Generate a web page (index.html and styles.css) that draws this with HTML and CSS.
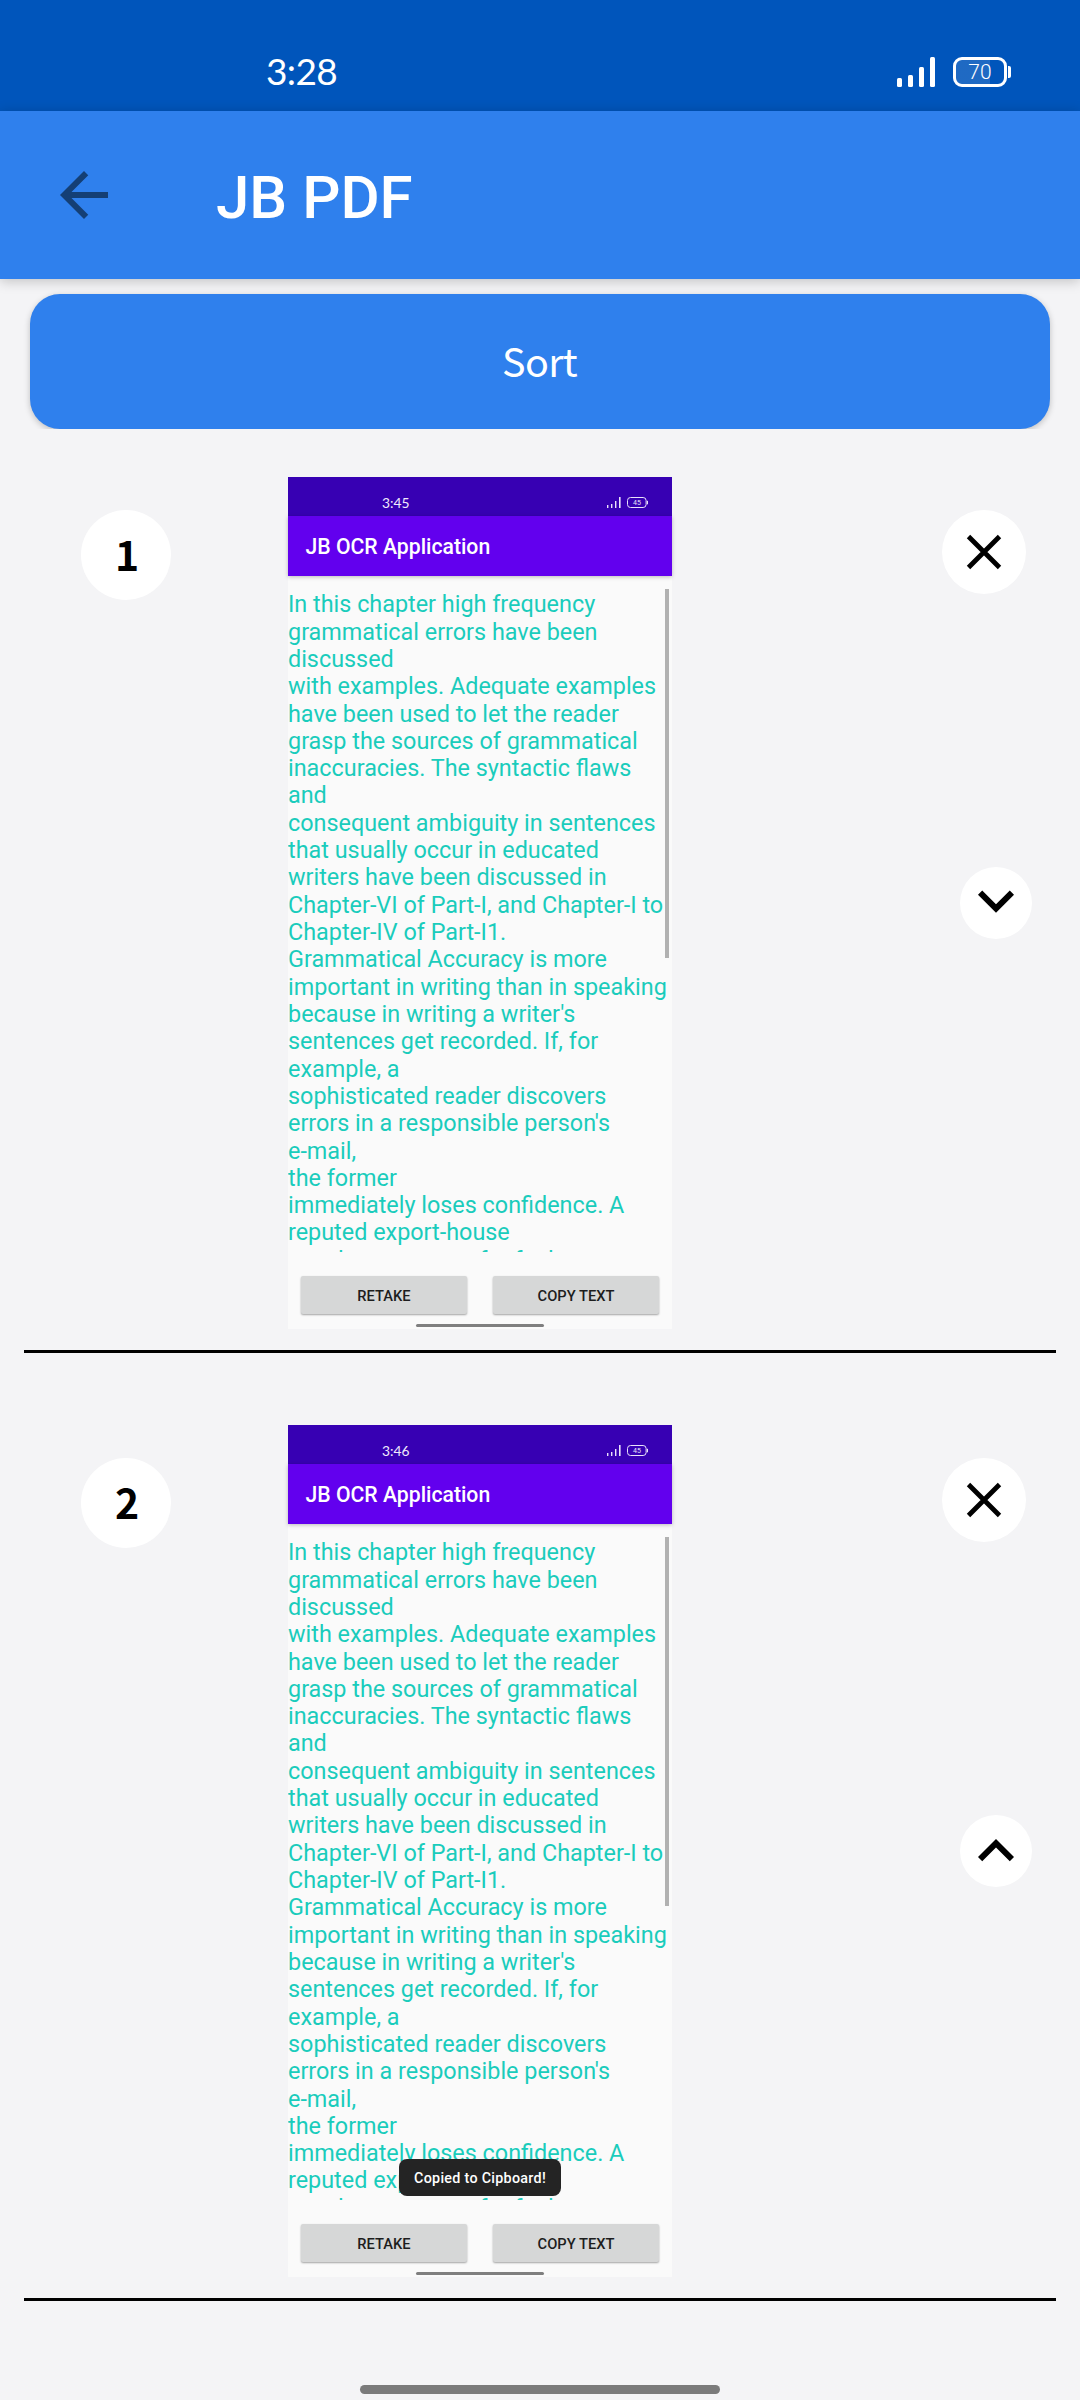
FILE: index.html
```html
<!DOCTYPE html>
<html lang="en">
<head>
<meta charset="utf-8">
<title>JB PDF</title>
<link rel="stylesheet" href="styles.css">
</head>
<body>
<div class="screen">
  <div class="status">
    <span class="clock">3:28</span>
    <svg class="signal" width="38" height="30" viewBox="0 0 38 30"><g fill="#fff"><rect y="21" width="5" height="9" rx="1.5"/><rect x="11" y="18" width="5" height="12" rx="1.5"/><rect x="22" y="10" width="5" height="20" rx="1.5"/><rect x="33" width="5" height="30" rx="1.5"/></g></svg>
    <div class="battery"><span>70</span></div>
  </div>
  <header class="appbar">
    <svg width="72" height="72" viewBox="0 0 24 24"><path fill="#143f75" d="M20 11H7.83l5.59-5.59L12 4l-8 8 8 8 1.41-1.41L7.83 13H20v-2z"/></svg>
    <h1>JB PDF</h1>
  </header>
  <main class="content">
    <div class="sort-wrap"><button class="sort">Sort</button></div>
    <section class="item">
      <div class="num">1</div>
      <div class="page">
        <div class="p-status"><span class="p-clock">3:45</span>
          <svg width="42" height="12" viewBox="0 0 42 12"><g fill="#e9e1fa"><rect y="8" width="1.4" height="3"/><rect x="4" y="7" width="1.4" height="4"/><rect x="8" y="4" width="1.4" height="7"/><rect x="12" y="0" width="1.6" height="11"/><path d="M39.8 3.5l1.2.6v3l-1.2.6z"/></g><rect x="20.5" y=".5" width="18.6" height="10" rx="3" fill="none" stroke="#e9e1fa"/><text x="30" y="8.2" text-anchor="middle" class="p-level">45</text></svg>
        </div>
        <div class="p-bar">JB OCR Application</div>
        <div class="p-body">
          <div class="p-text">In this chapter high frequency<br>grammatical errors have been<br>discussed<br>with examples. Adequate examples<br>have been used to let the reader<br>grasp the sources of grammatical<br>inaccuracies. The syntactic flaws<br>and<br>consequent ambiguity in sentences<br>that usually occur in educated<br>writers have been discussed in<br>Chapter-VI of Part-I, and Chapter-I to<br>Chapter-IV of Part-I1.<br>Grammatical Accuracy is more<br>important in writing than in speaking<br>because in writing a writer's<br>sentences get recorded. If, for<br>example, a<br>sophisticated reader discovers<br>errors in a responsible person's<br>e-mail,<br>the former<br>immediately loses confidence. A<br>reputed export-house<br>may lose contract for faulty</div>
          <div class="p-scroll"></div>
        </div>
        <div class="p-actions"><span>RETAKE</span><span>COPY TEXT</span></div>
        <div class="p-home"></div>
      </div>
      <div class="tools">
        <svg class="close" width="84" height="84" viewBox="0 0 84 84"><circle cx="42" cy="42" r="42" fill="#fff"/><path d="M26.5 26.5l31 31M57.5 26.5l-31 31" stroke="#000" stroke-width="4.8"/></svg>
        <svg class="move" width="72" height="72" viewBox="0 0 24 24"><circle cx="12" cy="12" r="12" fill="#fff"/><path d="M7.41 7.84L12 12.42l4.59-4.58L18 9.25l-6 6-6-6z"/></svg>
      </div>
    </section>
    <section class="item">
      <div class="num">2</div>
      <div class="page">
        <div class="p-status"><span class="p-clock">3:46</span>
          <svg width="42" height="12" viewBox="0 0 42 12"><g fill="#e9e1fa"><rect y="8" width="1.4" height="3"/><rect x="4" y="7" width="1.4" height="4"/><rect x="8" y="4" width="1.4" height="7"/><rect x="12" y="0" width="1.6" height="11"/><path d="M39.8 3.5l1.2.6v3l-1.2.6z"/></g><rect x="20.5" y=".5" width="18.6" height="10" rx="3" fill="none" stroke="#e9e1fa"/><text x="30" y="8.2" text-anchor="middle" class="p-level">45</text></svg>
        </div>
        <div class="p-bar">JB OCR Application</div>
        <div class="p-body">
          <div class="p-text">In this chapter high frequency<br>grammatical errors have been<br>discussed<br>with examples. Adequate examples<br>have been used to let the reader<br>grasp the sources of grammatical<br>inaccuracies. The syntactic flaws<br>and<br>consequent ambiguity in sentences<br>that usually occur in educated<br>writers have been discussed in<br>Chapter-VI of Part-I, and Chapter-I to<br>Chapter-IV of Part-I1.<br>Grammatical Accuracy is more<br>important in writing than in speaking<br>because in writing a writer's<br>sentences get recorded. If, for<br>example, a<br>sophisticated reader discovers<br>errors in a responsible person's<br>e-mail,<br>the former<br>immediately loses confidence. A<br>reputed export-house<br>may lose contract for faulty</div>
          <div class="p-scroll"></div>
        </div>
        <div class="p-actions"><span>RETAKE</span><span>COPY TEXT</span></div>
        <div class="p-home"></div>
        <div class="toast">Copied to Cipboard!</div>
      </div>
      <div class="tools">
        <svg class="close" width="84" height="84" viewBox="0 0 84 84"><circle cx="42" cy="42" r="42" fill="#fff"/><path d="M26.5 26.5l31 31M57.5 26.5l-31 31" stroke="#000" stroke-width="4.8"/></svg>
        <svg class="move" width="72" height="72" viewBox="0 0 24 24"><circle cx="12" cy="12" r="12" fill="#fff"/><path d="M7.41 15.41L12 10.83l4.59 4.58L18 14l-6-6-6 6z"/></svg>
      </div>
    </section>
  </main>
  <div class="home"></div>
</div>
</body>
</html>
```
FILE: styles.css
```css
* { box-sizing: border-box; }
body { margin: 0; font-family: Roboto, sans-serif; }
svg { display: block; flex: none; }
.screen { width: 1080px; height: 2400px; background: #f4f4f6; overflow: hidden; display: flex; flex-direction: column; }

.status { height: 111px; background: #0055bb; display: flex; align-items: flex-start; padding: 57px 69px 0 266px; flex: none; color: #fff; }
.clock { font: 400 37px/28px Lato, sans-serif; flex: 1; letter-spacing: -0.6px; }
.signal { margin-right: 18px; }
.battery { width: 54px; height: 30px; margin-right: 4px; border: 3px solid #fff; border-radius: 9px; position: relative; text-align: center; font: 300 21px/24px Roboto, sans-serif; background: linear-gradient(90deg, rgba(255,255,255,.12) 34px, transparent 34px); }
.battery::after { content: ""; position: absolute; right: -7px; top: 6px; width: 3px; height: 12px; background: #fff; border-radius: 0 2px 2px 0; }

.appbar { height: 168px; flex: none; background: #2f80ed; display: flex; align-items: center; padding-left: 48px; box-shadow: 0 2px 12px rgba(0,0,0,.22); }
.appbar h1 { margin: 5px 0 0 96px; font-size: 60px; font-weight: 500; line-height: 72px; color: #fff; }

.content { flex: 1; display: flex; flex-direction: column; }
.sort-wrap { padding: 15px 30px 0; overflow: hidden; flex: none; display: flex; }
.sort { flex: 1; height: 135px; border: 0; border-radius: 30px; background: #2f80ed; color: #fff; font: 400 39.5px/60px "Noto Sans CJK SC", sans-serif; letter-spacing: -0.7px; box-shadow: 0 2px 6px rgba(0,0,0,.22); padding: 0 1px 3px 0; }

.item { margin: 0 24px; padding: 48px 24px 21px 57px; border-bottom: 3px solid #000; display: flex; align-items: stretch; flex: none; }
.item + .item { padding-top: 72px; }
.num { width: 90px; height: 90px; margin: 33px 117px 0 0; padding-left: 2px; border-radius: 50%; background: #fff; text-align: center; font: 700 41px/86px "Noto Sans CJK SC", sans-serif; color: #000; }
.tools { flex: 1; display: flex; flex-direction: column; align-items: flex-end; padding-top: 33px; gap: 273px; }
.close { margin-right: 6px; }

.page { width: 384px; height: 852px; background: #fafafa; position: relative; display: flex; flex-direction: column; }
.p-status { height: 39px; flex: none; background: #3700b3; display: flex; padding: 20px 23px 0 94px; justify-content: space-between; }
.p-clock { font: 400 13.8px/12px Lato, sans-serif; color: #f0eafc; }
.p-level { font: 400 7px Roboto, sans-serif; fill: #e9e1fa; }
.p-bar { height: 60px; flex: none; background: #6200ee; color: #fff; font-size: 21.2px; font-weight: 500; line-height: 62px; padding-left: 17.5px; box-shadow: 0 1px 4px rgba(0,0,0,.25); }
.p-body { height: 675px; margin-top: 1px; flex: none; overflow: hidden; display: flex; justify-content: space-between; padding: 12px 3px 0 0; }
.p-text { font-size: 23.38px; line-height: 27.32px; color: #1accbc; white-space: nowrap; padding-top: 2.3px; width: 377px; flex: none; }
.p-scroll { width: 4px; height: 369px; background: #b1b1b1; flex: none; }
.p-actions { display: flex; gap: 26px; padding: 24px 13px 0; flex: none; }
.p-actions span { flex: 1; height: 38px; background: #d6d7d7; border-radius: 2px; text-align: center; font-size: 14.7px; font-weight: 500; line-height: 40px; color: #1d1d1d; box-shadow: 0 1px 2px rgba(0,0,0,.35); }
.p-home { width: 128px; height: 3px; margin: 10px auto 0; border-radius: 2px; background: #7f7f7f; }
.toast { position: absolute; left: 111px; top: 734px; width: 162px; height: 37px; border-radius: 8px; background: #242424; color: #fff; text-align: center; font-size: 14.3px; letter-spacing: .3px; font-weight: 500; line-height: 39px; white-space: nowrap; }

.home { width: 360px; height: 9px; margin: 0 auto 6px; border-radius: 5px; background: #7b7b7b; flex: none; }
```
